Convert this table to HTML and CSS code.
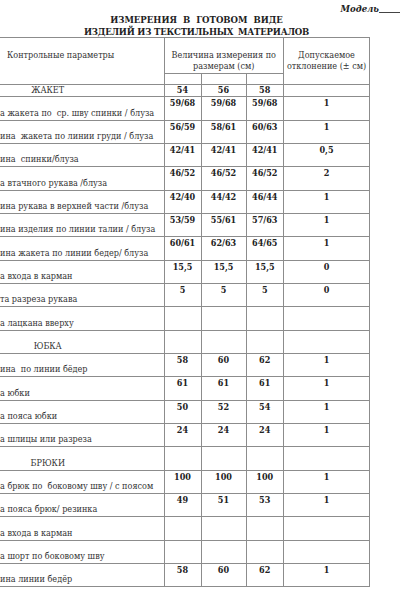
FILE: index.html
```html
<!DOCTYPE html>
<html lang="ru">
<head>
<meta charset="utf-8">
<title>Измерения в готовом виде</title>
<link rel="stylesheet" href="styles.css">
</head>
<body>
<div class="page">
  <div class="model"><span class="model-label">Модель</span><span class="model-line"></span></div>
  <div class="title">
    <div class="title-1">ИЗМЕРЕНИЯ В ГОТОВОМ ВИДЕ</div>
    <div class="title-2">ИЗДЕЛИЙ ИЗ ТЕКСТИЛЬНЫХ <span class="gap">МАТЕРИАЛОВ</span></div>
  </div>
  <table class="sheet">
    <colgroup>
      <col class="c-label">
      <col class="c-s1">
      <col class="c-s2">
      <col class="c-s3">
      <col class="c-tol">
    </colgroup>
    <tr class="h1">
      <td class="head-label" rowspan="2">Контрольные параметры</td>
      <td class="head-mid" colspan="3">Величина измерения по<br>размерам (см)</td>
      <td class="head-tol" rowspan="2">Допускаемое<br>отклонение (± см)</td>
    </tr>
    <tr class="h2"><td></td><td></td><td></td></tr>
    <tr class="sizes">
      <td class="section top">ЖАКЕТ</td>
      <td class="num">54</td><td class="num">56</td><td class="num">58</td><td></td>
    </tr>
    <tr><td class="lbl">а жакета по&nbsp; ср. шву спинки / блуза</td><td class="num">59/68</td><td class="num">59/68</td><td class="num">59/68</td><td class="num">1</td></tr>
    <tr><td class="lbl">ина&nbsp; жакета по линии груди / блуза</td><td class="num">56/59</td><td class="num">58/61</td><td class="num">60/63</td><td class="num">1</td></tr>
    <tr><td class="lbl">ина&nbsp; спинки/блуза</td><td class="num">42/41</td><td class="num">42/41</td><td class="num">42/41</td><td class="num">0,5</td></tr>
    <tr><td class="lbl">а втачного рукава /блуза</td><td class="num">46/52</td><td class="num">46/52</td><td class="num">46/52</td><td class="num">2</td></tr>
    <tr><td class="lbl">ина рукава в верхней части /блуза</td><td class="num">42/40</td><td class="num">44/42</td><td class="num">46/44</td><td class="num">1</td></tr>
    <tr><td class="lbl">ина изделия по линии талии / блуза</td><td class="num">53/59</td><td class="num">55/61</td><td class="num">57/63</td><td class="num">1</td></tr>
    <tr><td class="lbl">ина жакета по линии бедер/ блуза</td><td class="num">60/61</td><td class="num">62/63</td><td class="num">64/65</td><td class="num">1</td></tr>
    <tr><td class="lbl">а входа в карман</td><td class="num">15,5</td><td class="num">15,5</td><td class="num">15,5</td><td class="num">0</td></tr>
    <tr><td class="lbl">та разреза рукава</td><td class="num">5</td><td class="num">5</td><td class="num">5</td><td class="num">0</td></tr>
    <tr><td class="lbl">а лацкана вверху</td><td></td><td></td><td></td><td></td></tr>
    <tr><td class="lbl section">ЮБКА</td><td></td><td></td><td></td><td></td></tr>
    <tr><td class="lbl">ина&nbsp; по линии бёдер</td><td class="num">58</td><td class="num">60</td><td class="num">62</td><td class="num">1</td></tr>
    <tr><td class="lbl">а юбки</td><td class="num">61</td><td class="num">61</td><td class="num">61</td><td class="num">1</td></tr>
    <tr><td class="lbl">а пояса юбки</td><td class="num">50</td><td class="num">52</td><td class="num">54</td><td class="num">1</td></tr>
    <tr><td class="lbl">а шлицы или разреза</td><td class="num">24</td><td class="num">24</td><td class="num">24</td><td class="num">1</td></tr>
    <tr><td class="lbl section">БРЮКИ</td><td></td><td></td><td></td><td></td></tr>
    <tr><td class="lbl">а брюк по&nbsp; боковому шву / с поясом</td><td class="num">100</td><td class="num">100</td><td class="num">100</td><td class="num">1</td></tr>
    <tr><td class="lbl">а пояса брюк/ резинка</td><td class="num">49</td><td class="num">51</td><td class="num">53</td><td class="num">1</td></tr>
    <tr><td class="lbl">а входа в карман</td><td></td><td></td><td></td><td></td></tr>
    <tr><td class="lbl">а шорт по боковому шву</td><td></td><td></td><td></td><td></td></tr>
    <tr><td class="lbl">ина линии бедёр</td><td class="num">58</td><td class="num">60</td><td class="num">62</td><td class="num">1</td></tr>
  </table>
</div>
</body>
</html>
```
FILE: styles.css
```css
html, body {
  margin: 0;
  padding: 0;
  background: #ffffff;
}

.page {
  width: 400px;
  height: 600px;
  overflow: hidden;
  font-family: "DejaVu Serif Condensed", "DejaVu Serif", serif;
  font-stretch: condensed;
  color: #2a2a2a;
}

.model {
  display: flex;
  justify-content: flex-end;
  align-items: flex-end;
  height: 14px;
  box-sizing: border-box;
  padding-top: 4px;
}

.model-label {
  font-size: 9.5px;
  line-height: 10px;
  font-weight: bold;
  font-style: italic;
  color: #222;
}

.model-line {
  display: inline-block;
  width: 21px;
  height: 0;
  border-bottom: 1px solid #444;
  margin-bottom: 1px;
}

.title {
  font-size: 9.5px;
  line-height: 11.5px;
  height: 23px;
  font-weight: bold;
  text-align: center;
  padding-right: 7px;
  color: #222;
}

.title-1 {
  word-spacing: 3px;
}

.title-2 {
  word-spacing: 0;
  letter-spacing: -0.2px;
}

.title-2 .gap {
  margin-left: 2px;
}

.sheet {
  border-collapse: collapse;
  table-layout: fixed;
  width: 369.5px;
  font-size: 9px;
  line-height: 11px;
}

.c-label { width: 164px; }
.c-s1 { width: 37px; }
.c-s2 { width: 45px; }
.c-s3 { width: 37.5px; }
.c-tol { width: 86px; }

.sheet td {
  border: 1px solid #8c8c8c;
  padding: 0;
  white-space: nowrap;
  overflow: hidden;
  vertical-align: top;
}

.sheet tr > td:first-child {
  border-left: none;
}

.sheet tr.h2 > td:first-child {
  border-left: 1px solid #8c8c8c;
}

.sheet tr {
  height: 23.33px;
}

.sheet tr.h1 { height: 35.7px; }
.sheet tr.h2 { height: 11.8px; }
.sheet tr.sizes { height: 11.5px; }

.head-label {
  padding-top: 12px !important;
  padding-left: 7px !important;
  color: #333;
}

.head-mid,
.head-tol {
  text-align: center;
  padding-top: 12px !important;
  color: #333;
}

.lbl {
  vertical-align: bottom !important;
  padding-bottom: 1px !important;
  color: #333;
}

.section {
  text-align: center;
  padding-right: 68px !important;
  color: #333;
}

.section.top {
  vertical-align: middle;
}

.num {
  text-align: center;
  font-weight: bold;
  color: #222;
  padding-top: 1px !important;
}

.sizes .num {
  padding-top: 0 !important;
  vertical-align: middle !important;
}
```
